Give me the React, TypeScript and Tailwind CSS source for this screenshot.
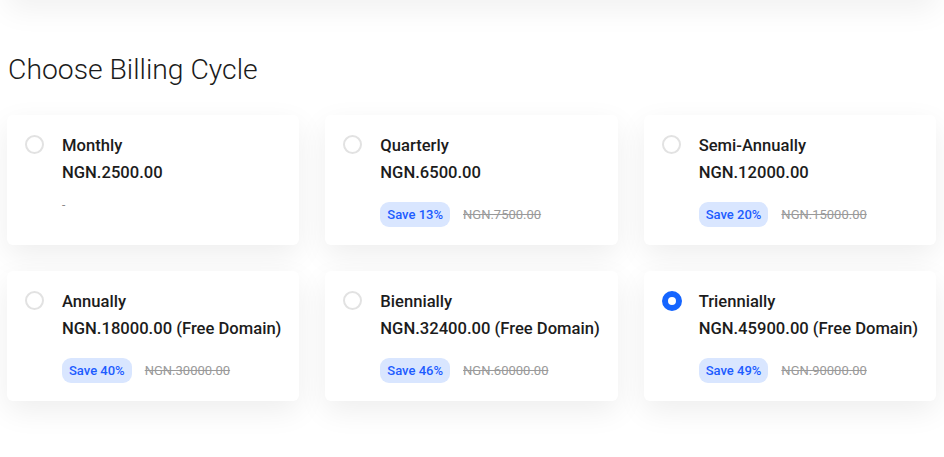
import React, { useState } from 'react';

interface Cycle {
  id: string;
  label: string;
  price: string;
  save?: string;
  was?: string;
}

const cycles: Cycle[] = [
  { id: 'monthly', label: 'Monthly', price: 'NGN.2500.00' },
  { id: 'quarterly', label: 'Quarterly', price: 'NGN.6500.00', save: 'Save 13%', was: 'NGN.7500.00' },
  { id: 'semi', label: 'Semi-Annually', price: 'NGN.12000.00', save: 'Save 20%', was: 'NGN.15000.00' },
  { id: 'annually', label: 'Annually', price: 'NGN.18000.00 (Free Domain)', save: 'Save 40%', was: 'NGN.30000.00' },
  { id: 'biennially', label: 'Biennially', price: 'NGN.32400.00 (Free Domain)', save: 'Save 46%', was: 'NGN.60000.00' },
  { id: 'triennially', label: 'Triennially', price: 'NGN.45900.00 (Free Domain)', save: 'Save 49%', was: 'NGN.90000.00' },
];

export default function App() {
  const [selected, setSelected] = useState<string>('triennially');

  return (
    <div className="min-h-[457px] bg-white px-[7px] font-['Roboto',sans-serif] overflow-hidden">
      {/* bottom of the card above */}
      <div className="h-[40px] -mt-[40px] bg-white shadow-[0_10px_30px_rgba(0,0,0,0.06)]" />

      <h2 className="mt-[52px] pl-px text-[28.3px] font-light leading-[36px] text-[#1b1b1b]">Choose Billing Cycle</h2>

      <div className="mt-[27px] grid grid-cols-3 gap-[26px] w-[929px]">
        {cycles.map((c) => {
          const active = c.id === selected;
          return (
            <div
              key={c.id}
              onClick={() => setSelected(c.id)}
              className="flex h-[130px] cursor-pointer rounded-[6px] bg-white pl-[18px] pt-[17px] shadow-[0_10px_30px_rgba(0,0,0,0.07)]"
            >
              <div className="mt-[3px] w-[19px] shrink-0">
                {active ? (
                  <div className="h-[20px] w-[20px] rounded-full border-[6px] border-[#1565ff] bg-white" />
                ) : (
                  <div className="h-[19px] w-[19px] rounded-full border-2 border-[#e2e2e2] bg-white" />
                )}
              </div>
              <div className="ml-[18px] flex flex-col">
                <span className="text-[16.6px] font-medium leading-[27px] text-[#1c1c1c]">{c.label}</span>
                <span className="text-[16.6px] font-medium leading-[27px] text-[#1c1c1c]">{c.price}</span>
                {c.save ? (
                  <div className="mt-[16px] flex items-center gap-[13px]">
                    <span className="flex h-[25px] items-center rounded-[9px] bg-[#d9e6ff] px-[7px] text-[13px] font-medium text-[#1d5cff]">
                      {c.save}
                    </span>
                    <span className="text-[13px] text-[#9a9a9a] line-through">{c.was}</span>
                  </div>
                ) : (
                  <div className="mt-[7px] h-[25px] text-[12px] leading-[25px] text-[#8a8a8a]">-</div>
                )}
              </div>
            </div>
          );
        })}
      </div>
    </div>
  );
}
